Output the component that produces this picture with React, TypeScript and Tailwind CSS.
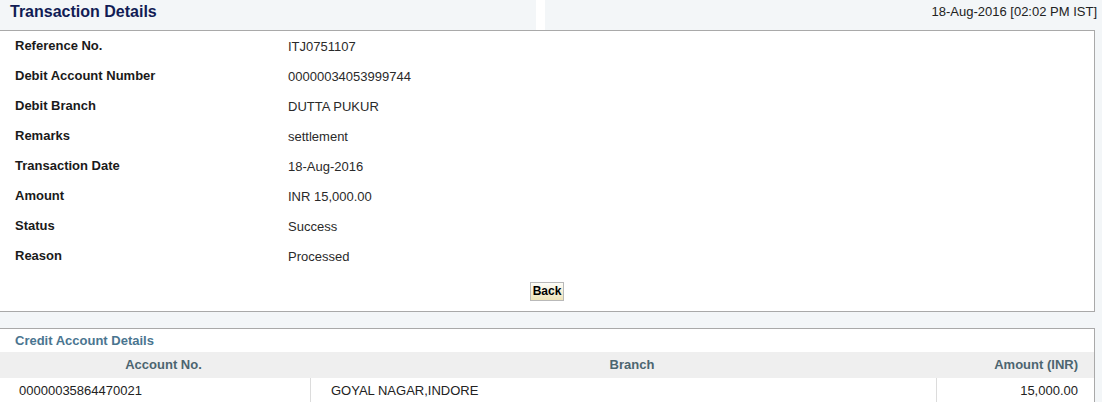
const ROWS = [
  ['Reference No.', 'ITJ0751107'],
  ['Debit Account Number', '00000034053999744'],
  ['Debit Branch', 'DUTTA PUKUR'],
  ['Remarks', 'settlement'],
  ['Transaction Date', '18-Aug-2016'],
  ['Amount', 'INR 15,000.00'],
  ['Status', 'Success'],
  ['Reason', 'Processed'],
]

export default function App() {
  return (
    <div className="w-[1102px] h-[402px] overflow-hidden bg-[#f3f6f8] text-[13px] text-[#222] font-['Liberation_Sans',Arial,sans-serif]">
      {/* page header */}
      <div className="flex h-[30px]">
        <div className="w-[536px] pl-[10px] pt-[2px]">
          <h1 className="text-[16px] leading-[20px] font-bold text-[#111c55]">Transaction Details</h1>
        </div>
        <div className="w-[9px] bg-white" />
        <div className="flex-1 pr-[5px] pt-[4px] text-right leading-[16px]">18-Aug-2016 [02:02 PM IST]</div>
      </div>

      {/* transaction summary */}
      <div className="w-[1095px] h-[282px] bg-white border-t border-r border-b border-[#a9a9a9]">
        <div className="flex flex-col">
          {ROWS.map(([label, value]) => (
            <div key={label} className="flex h-[30px] items-center">
              <div className="w-[288px] pl-[15px] font-bold text-[#1a1a1a]">{label}</div>
              <div className="pt-[2px] text-[#2a2a2a]">{value}</div>
            </div>
          ))}
        </div>
        <div className="flex justify-center mt-[11px]">
          <button className="h-[19px] px-[2px] border border-[#b9b9b9] bg-gradient-to-b from-[#fdfdf8] to-[#eee3b8] text-[12px] leading-[15px] font-bold text-black">
            Back
          </button>
        </div>
      </div>

      {/* credit account details */}
      <div className="mt-[16px] w-[1095px] bg-white border-t border-r border-[#a9a9a9]">
        <div className="h-[23px] pl-[15px] flex items-center font-bold text-[#4a7590]">Credit Account Details</div>
        <div className="flex h-[26px] items-center bg-[#efefef] font-bold text-[#4c6570]">
          <div className="w-[311px] pl-4 text-center">Account No.</div>
          <div className="w-[626px] pl-4 text-center">Branch</div>
          <div className="flex-1 pr-4 text-right">Amount (INR)</div>
        </div>
        <div className="flex h-[25px] items-center">
          <div className="w-[311px] h-full pl-[19px] flex items-center border-r border-[#dcdcdc]">00000035864470021</div>
          <div className="w-[626px] h-full pl-[20px] flex items-center border-r border-[#dcdcdc]">GOYAL NAGAR,INDORE</div>
          <div className="flex-1 pr-4 text-right">15,000.00</div>
        </div>
      </div>
    </div>
  )
}
